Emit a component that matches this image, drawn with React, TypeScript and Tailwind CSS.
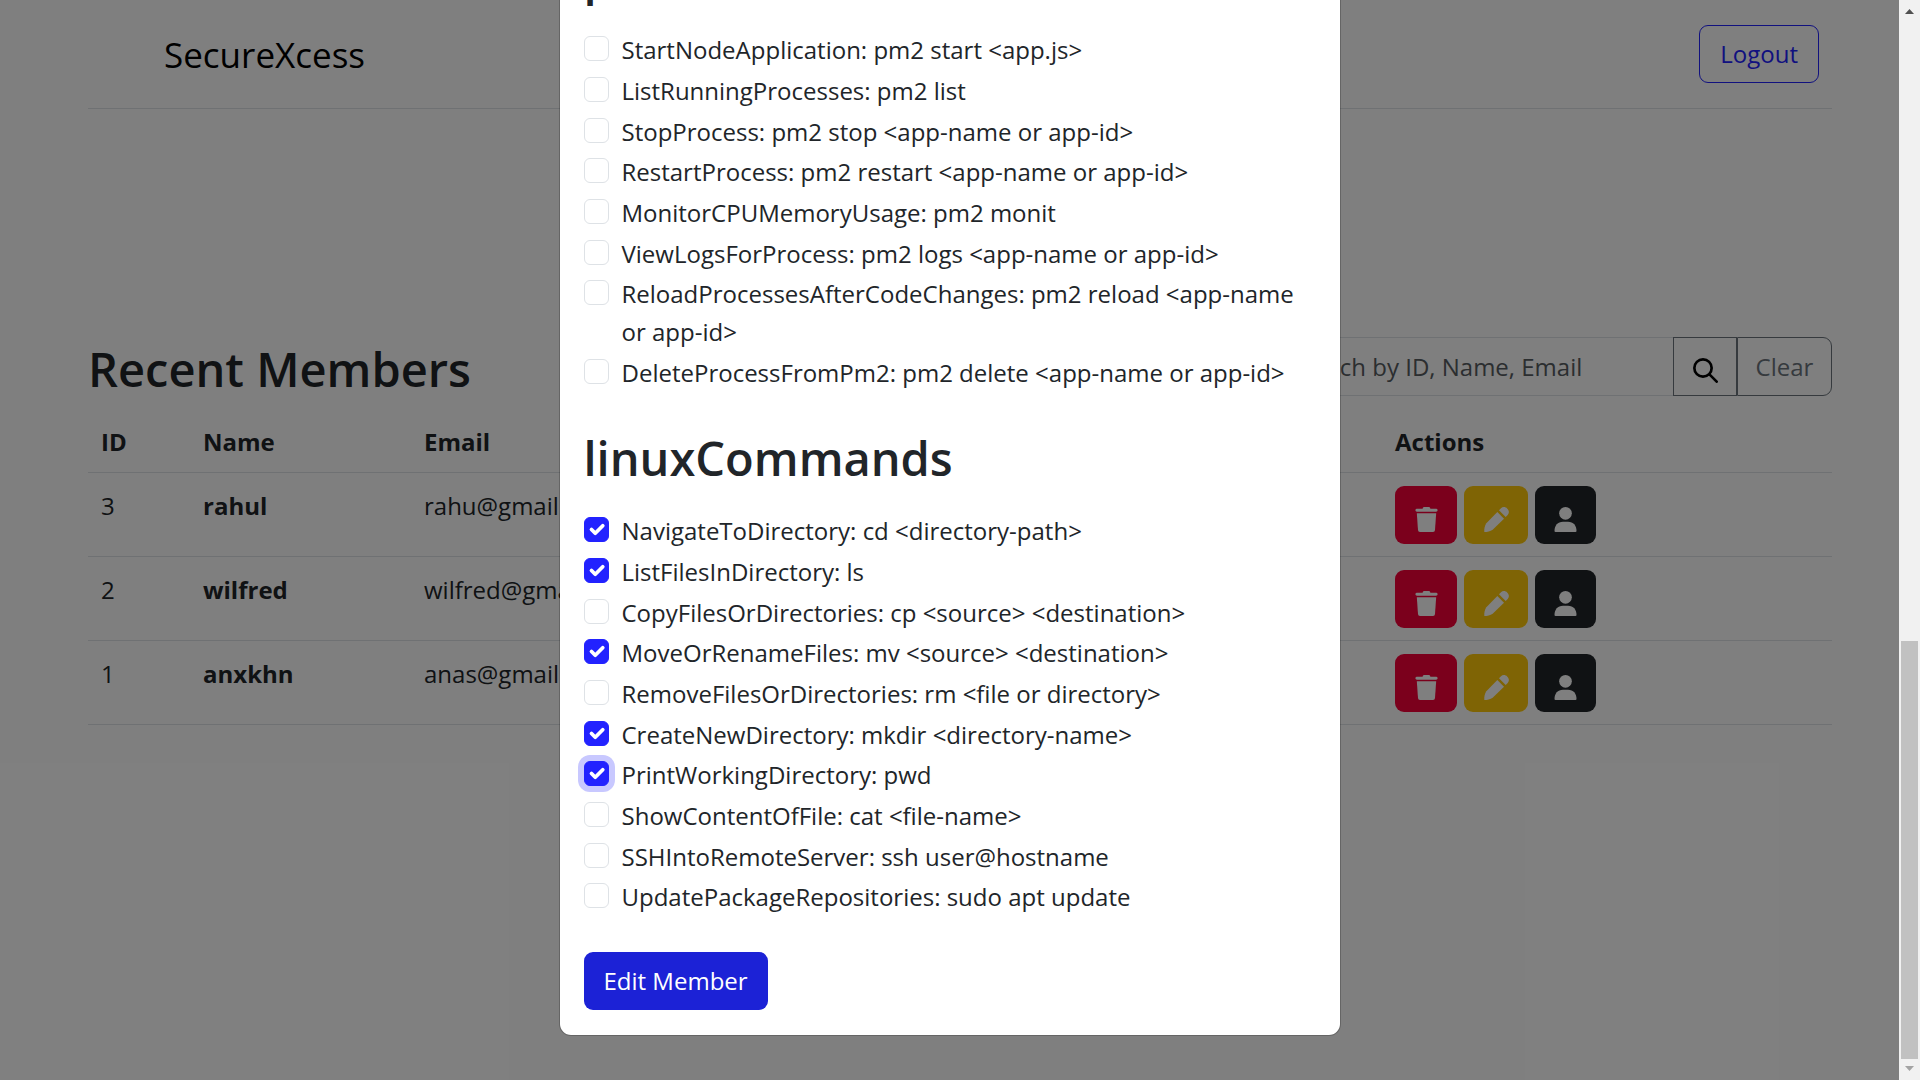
import { useState } from "react";

const pm2Commands = [
  "StartNodeApplication: pm2 start <app.js>",
  "ListRunningProcesses: pm2 list",
  "StopProcess: pm2 stop <app-name or app-id>",
  "RestartProcess: pm2 restart <app-name or app-id>",
  "MonitorCPUMemoryUsage: pm2 monit",
  "ViewLogsForProcess: pm2 logs <app-name or app-id>",
  "ReloadProcessesAfterCodeChanges: pm2 reload <app-name or app-id>",
  "DeleteProcessFromPm2: pm2 delete <app-name or app-id>",
];

const linuxCommands = [
  "NavigateToDirectory: cd <directory-path>",
  "ListFilesInDirectory: ls",
  "CopyFilesOrDirectories: cp <source> <destination>",
  "MoveOrRenameFiles: mv <source> <destination>",
  "RemoveFilesOrDirectories: rm <file or directory>",
  "CreateNewDirectory: mkdir <directory-name>",
  "PrintWorkingDirectory: pwd",
  "ShowContentOfFile: cat <file-name>",
  "SSHIntoRemoteServer: ssh user@hostname",
  "UpdatePackageRepositories: sudo apt update",
];

const members = [
  { id: 3, name: "rahul", email: "rahu@gmail.com" },
  { id: 2, name: "wilfred", email: "wilfred@gmail.com" },
  { id: 1, name: "anxkhn", email: "anas@gmail.com" },
];

function TrashIcon() {
  return (
    <svg viewBox="0 0 75 75" className="size-[25px]" fill="currentColor" aria-hidden="true">
      <path d="M26 6c0-4 2-6 6-6h11c4 0 6 2 6 6z" />
      <rect x="4.5" y="5" width="66" height="9" rx="4" />
      <path d="M8.500 18.500H66.500L63 69q-.5 6-6 6H18q-5.500 0-6-6z" />
    </svg>
  );
}

function PencilIcon() {
  return (
    <svg viewBox="0 0 75 75" className="size-[25px]" fill="currentColor" aria-hidden="true">
      <path d="M40 15 60 35 26 68C19 73 9 75 1 75 0 67 2 57 7 49z" />
      <path d="M45 10 51 4C56-1 64-1 70 5 76 11 76 19 71 24L65 30z" />
    </svg>
  );
}

function PersonIcon() {
  return (
    <svg viewBox="0 0 75 75" className="size-[25px]" fill="currentColor" aria-hidden="true">
      <circle cx="37.5" cy="19" r="19" />
      <path d="M4.500 72C4.500 55 14 44 30 44H45C61 44 70.500 55 70.500 72Q70.500 75 67.500 75H7.500Q4.500 75 4.500 72z" />
    </svg>
  );
}

function SearchIcon() {
  return (
    <svg viewBox="0 0 75 75" className="size-[25px]" fill="none" stroke="currentColor" strokeWidth="8" strokeLinecap="round" aria-hidden="true">
      <circle cx="30" cy="30" r="26" />
      <path d="m50 50 21 21" />
    </svg>
  );
}

function CommandOption({ label, checked, focused, onToggle }: { label: string; checked: boolean; focused: boolean; onToggle: () => void }) {
  return (
    <li className="pb-[3px] nth-[3n]:pb-0.5">
      <label className="flex items-start gap-[13px]">
        <span className="relative mt-[5px] flex size-[25px] shrink-0">
          <input
            type="checkbox"
            checked={checked}
            onChange={onToggle}
            className={
              "size-[25px] appearance-none rounded-[6px] border border-[#dee2e6] bg-white outline-none checked:border-[#2222ff] checked:bg-[#2222ff] " +
              (focused ? "ring-[6px] ring-[#c8c8ff]" : "")
            }
          />
          {checked && (
            <svg viewBox="0 0 20 20" className="pointer-events-none absolute inset-0 size-[25px]" fill="none" stroke="#fff" strokeWidth="3" strokeLinecap="round" strokeLinejoin="round">
              <path d="m6 10 3 3 6-6" />
            </svg>
          )}
        </span>
        <span className="leading-[38px]">{label}</span>
      </label>
    </li>
  );
}

function CommandGroup({ title, items, selected, focused, onToggle }: { title: string; items: string[]; selected: string[]; focused: string; onToggle: (label: string) => void }) {
  return (
    <section>
      <h1 className="mb-6 text-[47px] leading-[60px] font-semibold">{title}</h1>
      <ul>
        {items.map((label) => (
          <CommandOption key={label} label={label} checked={selected.includes(label)} focused={label === focused} onToggle={() => onToggle(label)} />
        ))}
      </ul>
    </section>
  );
}

function ActionButtons({ name }: { name: string }) {
  return (
    <div className="flex gap-[7px] text-white">
      <button type="button" aria-label={"Delete " + name} className="flex h-[58px] w-[62px] items-center justify-center rounded-[9px] bg-[#f70039] pt-[9px]">
        <TrashIcon />
      </button>
      <button type="button" aria-label={"Edit " + name} className="flex h-[58px] w-[64px] items-center justify-center rounded-[9px] bg-[#ffc80a] pt-[9px]">
        <PencilIcon />
      </button>
      <button type="button" aria-label={"View " + name} className="flex h-[58px] w-[61px] items-center justify-center rounded-[9px] bg-[#212529] pt-[9px]">
        <PersonIcon />
      </button>
    </div>
  );
}

function Dashboard() {
  return (
    <div className="mr-[67px] ml-[88px] min-w-0 flex-1">
      <header className="flex items-center justify-between border-b border-[#dee2e6] pt-[25px] pr-[13px] pb-[25px] pl-[76px]">
        <a href="#" className="pt-0.5 text-[35px] leading-[56px] text-black">SecureXcess</a>
        <button type="button" className="rounded-[9px] border border-[#2222ff] px-5 text-[24px] leading-[56px] text-[#2222ff]">Logout</button>
      </header>
      <main>
        <div className="mt-[228px] flex items-start justify-between">
          <h1 className="text-[47px] leading-[64px] font-semibold">Recent Members</h1>
          <form className="flex h-[59px] w-[563px]">
            <input
              type="text"
              aria-label="Search members"
              placeholder="Search by ID, Name, Email"
              className="min-w-0 flex-1 rounded-l-[9px] border border-r-0 border-[#dee2e6] px-5 placeholder:text-[#575c61]"
            />
            <button type="button" aria-label="Search" className="flex w-16 items-center justify-center border border-[#6c757d] pt-2 text-black">
              <SearchIcon />
            </button>
            <button type="button" className="w-[95px] rounded-r-[9px] border border-[#6c757d] text-[#6c757d]">Clear</button>
          </form>
        </div>
        <table className="mt-[9px] w-full table-fixed border-collapse text-left">
          <thead>
            <tr className="border-b border-[#dee2e6]">
              <th scope="col" className="w-[102px] px-[13px] pt-[13px] pb-[11px] leading-[38px]">ID</th>
              <th scope="col" className="w-[221px] px-[13px] pt-[13px] pb-[11px] leading-[38px]">Name</th>
              <th scope="col" className="px-[13px] pt-[13px] pb-[11px] leading-[38px]">Email</th>
              <th scope="col" className="w-[450px] px-[13px] pt-[13px] pb-[11px] leading-[38px]">Actions</th>
            </tr>
          </thead>
          <tbody>
            {members.map((m) => (
              <tr key={m.id} className="border-b border-[#dee2e6] align-top">
                <td className="px-[13px] py-3 leading-[42px]">{m.id}</td>
                <td className="px-[13px] py-3 leading-[42px] font-bold">{m.name}</td>
                <td className="px-[13px] py-3 leading-[42px]">{m.email}</td>
                <td className="px-[13px] pt-[13px] pb-3"><ActionButtons name={m.name} /></td>
              </tr>
            ))}
          </tbody>
        </table>
      </main>
    </div>
  );
}

function PageScrollbar() {
  return (
    <div aria-hidden="true" className="flex h-full w-[21px] shrink-0 flex-col items-center bg-[#f1f1f1] py-[9px]">
      <svg viewBox="0 0 9 5" className="h-[5px] w-[9px]" fill="#505050"><path d="M0 5 4.500 0 9 5z" /></svg>
      <div className="flex w-full flex-1 flex-col justify-end px-0.5 pb-[7px]">
        <div className="h-[40%] bg-[#c1c1c1]" />
      </div>
      <svg viewBox="0 0 9 5" className="h-[5px] w-[9px]" fill="#a3a3a3"><path d="M0 0h9L4.500 5z" /></svg>
    </div>
  );
}

export default function App() {
  const [selected, setSelected] = useState([linuxCommands[0], linuxCommands[1], linuxCommands[3], linuxCommands[5], linuxCommands[6]]);
  const toggle = (label: string) =>
    setSelected((prev) => (prev.includes(label) ? prev.filter((l) => l !== label) : [...prev, label]));

  return (
    <div className="flex h-screen overflow-hidden bg-white font-['Open_Sans',sans-serif] text-[24px] text-[#212529]">
      <div className="relative flex min-w-0 flex-1">
        <Dashboard />
        <div className="absolute inset-0 flex items-end justify-center overflow-hidden bg-black/50 pb-11">
          <div role="dialog" aria-modal="true" aria-label="Edit member" className="w-full max-w-[782px] shrink-0 rounded-[12px] border border-black/20 bg-white bg-clip-padding px-6 pt-6 pb-[25px]">
            <form className="flex flex-col items-start gap-[33px]">
              <CommandGroup title="pm2Commands" items={pm2Commands} selected={selected} focused="" onToggle={toggle} />
              <CommandGroup title="linuxCommands" items={linuxCommands} selected={selected} focused={linuxCommands[6]} onToggle={toggle} />
              <button type="button" className="rounded-[9px] bg-[#1c22d6] px-5 leading-[58px] text-white">Edit Member</button>
            </form>
          </div>
        </div>
      </div>
      <PageScrollbar />
    </div>
  );
}
